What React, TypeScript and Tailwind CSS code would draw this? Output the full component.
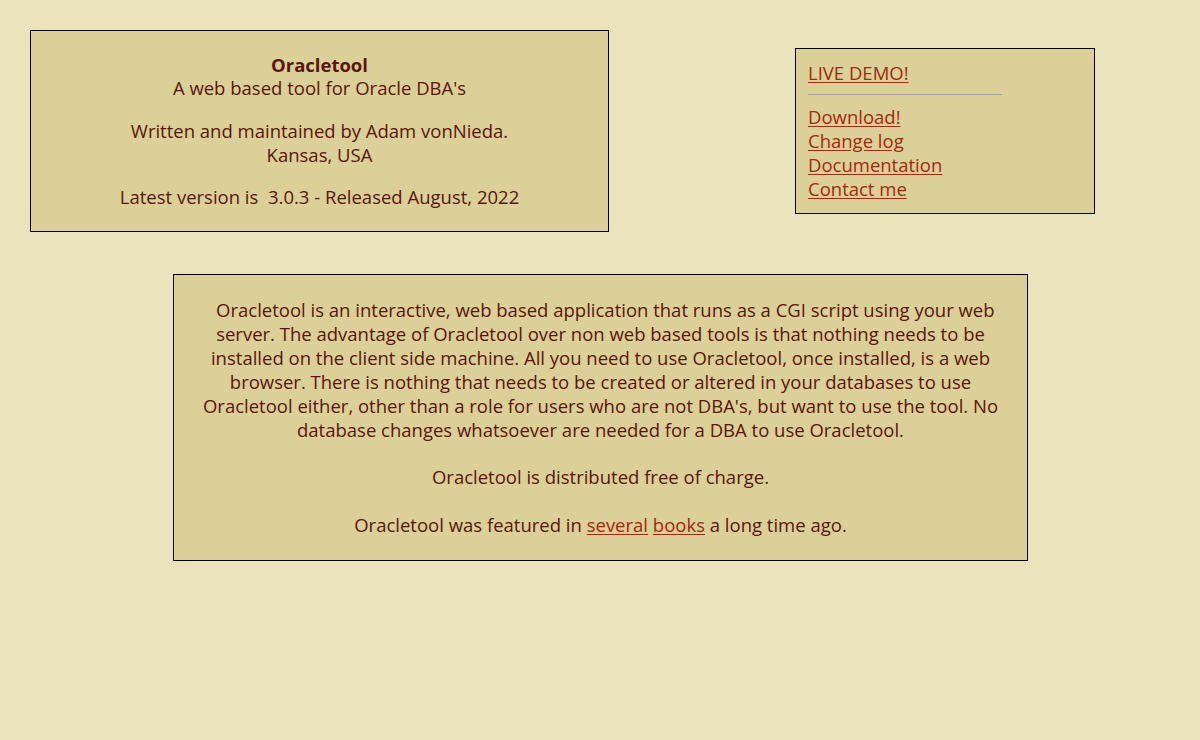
import React from 'react';

const Link = ({ children }: { children: React.ReactNode }) => (
  <a href="#" className="text-[#a3290f] underline underline-offset-2">
    {children}
  </a>
);

const App: React.FC = () => {
  return (
    <div className="min-h-[740px] w-full bg-[#ebe3bb] text-[#5a1508] font-['Open_Sans',sans-serif] text-[18.5px] leading-[24px]">
      <div className="flex items-start pl-[30px] pt-[30px]">
        {/* title box */}
        <div className="w-[579px] border border-black bg-[#dbd098] pt-[23px] pb-[22px] text-center">
          <p className="font-bold leading-[22px]">Oracletool</p>
          <p>A web based tool for Oracle DBA's</p>
          <p className="mt-[19px]">Written and maintained by Adam vonNieda.</p>
          <p>Kansas, USA</p>
          <p className="mt-[18px]">Latest version is&nbsp; 3.0.3 - Released August, 2022</p>
        </div>

        {/* links box */}
        <div className="ml-[186px] mt-[18px] w-[300px] border border-black bg-[#dbd098] px-[12px] py-[12px]">
          <Link>LIVE DEMO!</Link>
          <hr className="my-[9px] w-[194px] border-t border-b border-t-[#a3a6a8] border-b-[#d0ccb4]" />
          <div className="flex flex-col">
            <div><Link>Download!</Link></div>
            <div><Link>Change log</Link></div>
            <div><Link>Documentation</Link></div>
            <div><Link>Contact me</Link></div>
          </div>
        </div>
      </div>

      {/* description box */}
      <div className="ml-[173px] mt-[42px] w-[855px] border border-black bg-[#dbd098] pt-[23px] pb-[23px] text-center whitespace-nowrap">
        <p>
          &nbsp;&nbsp;Oracletool is an interactive, web based application that runs as a CGI script using your web
          <br />
          server. The advantage of Oracletool over non web based tools is that nothing needs to be
          <br />
          installed on the client side machine. All you need to use Oracletool, once installed, is a web
          <br />
          browser. There is nothing that needs to be created or altered in your databases to use
          <br />
          Oracletool either, other than a role for users who are not DBA's, but want to use the tool. No
          <br />
          database changes whatsoever are needed for a DBA to use Oracletool.
        </p>
        <p className="mt-[23px]">Oracletool is distributed free of charge.</p>
        <p className="mt-[24px]">
          Oracletool was featured in <Link>several</Link> <Link>books</Link> a long time ago.
        </p>
      </div>
    </div>
  );
};

export default App;
